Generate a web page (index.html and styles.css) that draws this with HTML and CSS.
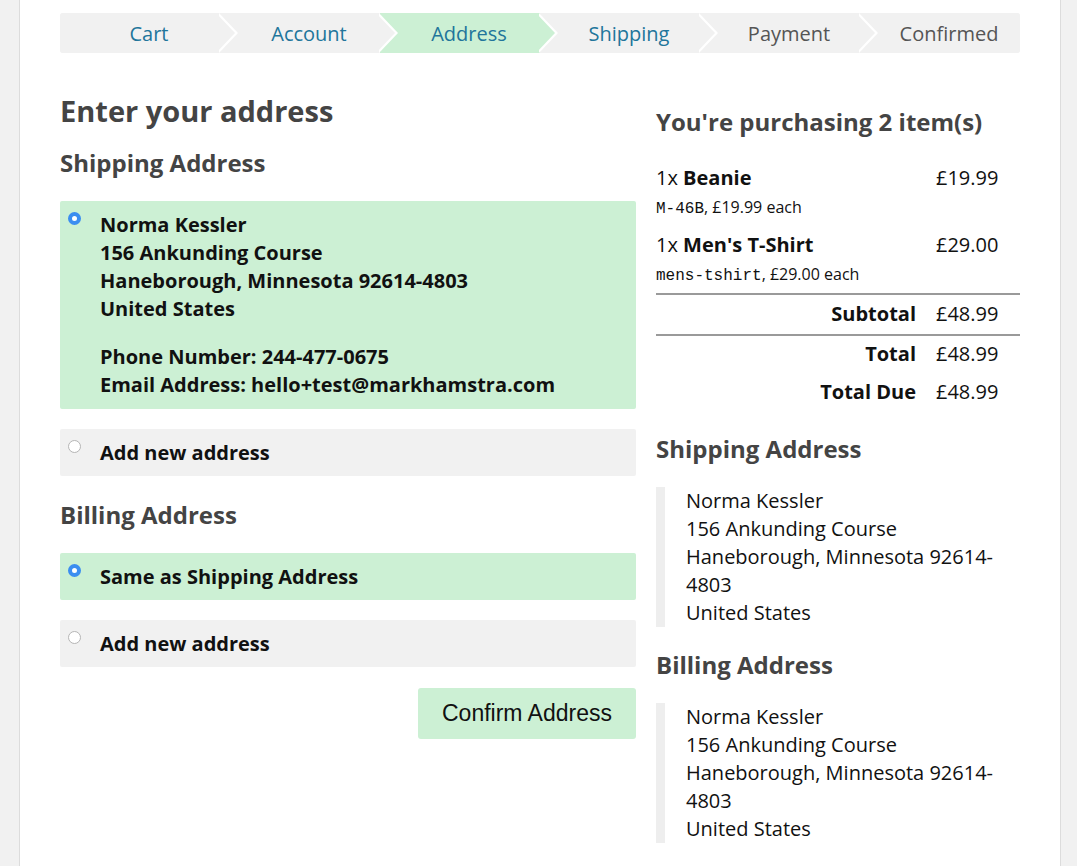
FILE: index.html
```html
<!DOCTYPE html>
<html lang="en">
<head>
<meta charset="utf-8">
<title>Checkout - Address</title>
<link rel="stylesheet" href="styles.css">
</head>
<body>
<div class="page">
  <ol class="steps">
    <li class="step done">Cart</li>
    <li class="step done">Account</li>
    <li class="step current">Address</li>
    <li class="step done">Shipping</li>
    <li class="step todo">Payment</li>
    <li class="step todo last">Confirmed</li>
  </ol>

  <div class="main">
    <section class="left">
      <h2 class="page-title">Enter your address</h2>
      <h3 class="section-title">Shipping Address</h3>

      <label class="option selected big">
        <input type="radio" name="shipping" checked>
        <span class="option-body">
          <span class="para">Norma Kessler<br>156 Ankunding Course<br>Haneborough, Minnesota 92614-4803<br>United States</span>
          <span class="para">Phone Number: 244-477-0675<br>Email Address: hello+test@markhamstra.com</span>
        </span>
      </label>

      <label class="option">
        <input type="radio" name="shipping">
        <span class="option-body">Add new address</span>
      </label>

      <h3 class="section-title billing">Billing Address</h3>

      <label class="option selected">
        <input type="radio" name="billing" checked>
        <span class="option-body">Same as Shipping Address</span>
      </label>

      <label class="option">
        <input type="radio" name="billing">
        <span class="option-body">Add new address</span>
      </label>

      <div class="actions">
        <button class="confirm" type="button">Confirm Address</button>
      </div>
    </section>

    <aside class="right">
      <h3 class="section-title summary-title">You're purchasing 2 item(s)</h3>

      <div class="cart">
        <div class="item">
          <div class="item-name">1x <b>Beanie</b></div>
          <div class="price">£19.99</div>
          <div class="item-meta"><code>M-46B</code>, £19.99 each</div>
        </div>
        <div class="item last-item">
          <div class="item-name">1x <b>Men's T-Shirt</b></div>
          <div class="price">£29.00</div>
          <div class="item-meta"><code>mens-tshirt</code>, £29.00 each</div>
        </div>
        <div class="totals subtotal">
          <div class="label">Subtotal</div>
          <div class="price">£48.99</div>
        </div>
        <div class="totals total">
          <div class="label">Total</div>
          <div class="price">£48.99</div>
        </div>
        <div class="totals">
          <div class="label">Total Due</div>
          <div class="price">£48.99</div>
        </div>
      </div>

      <h3 class="section-title side-title">Shipping Address</h3>
      <blockquote class="addr">Norma Kessler<br>156 Ankunding Course<br>Haneborough, Minnesota 92614-4803<br>United States</blockquote>

      <h3 class="section-title side-title">Billing Address</h3>
      <blockquote class="addr">Norma Kessler<br>156 Ankunding Course<br>Haneborough, Minnesota 92614-4803<br>United States</blockquote>
    </aside>
  </div>
</div>
</body>
</html>
```

FILE: styles.css
```css
* { box-sizing: border-box; }

html, body {
  margin: 0;
  padding: 0;
  background: #f1f1f1;
  font-family: "Open Sans", "Noto Sans", sans-serif;
  color: #111;
}

.page {
  margin-left: 19px;
  width: 1042px;
  min-height: 866px;
  background: #fff;
  border-left: 1px solid #dcdcdc;
  border-right: 1px solid #dcdcdc;
  padding: 13px 40px 0 40px;
}

/* Steps */
.steps {
  list-style: none;
  margin: 0;
  padding: 0;
  display: grid;
  grid-template-columns: repeat(6, 1fr);
  height: 40px;
  background: #f1f1f1;
  border-radius: 3px;
}

.step {
  position: relative;
  display: flex;
  align-items: center;
  justify-content: center;
  padding-left: 18px;
  font-size: 20px;
  background: #f1f1f1;
  color: #21759b;
}

.step:first-child { border-radius: 3px 0 0 3px; }
.step.last { border-radius: 0 3px 3px 0; }

.step.todo { color: #555; }
.step.current { background: #ccf0d4; }

.step::before,
.step::after {
  content: "";
  position: absolute;
  top: 0;
  width: 19px;
  height: 40px;
  clip-path: polygon(0 0, 100% 50%, 0 100%);
  z-index: 1;
}

.step::before {
  left: calc(100% - 1px);
  background: #fff;
}

.step::after {
  left: calc(100% - 4px);
  background: #f1f1f1;
}

.step.current::after { background: #ccf0d4; }

.step.last::before,
.step.last::after { display: none; }

/* Main grid */
.main {
  display: grid;
  grid-template-columns: 576px 364px;
  column-gap: 20px;
  margin-top: 41px;
}

.page-title {
  margin: 0;
  font-size: 29px;
  line-height: 34px;
  font-weight: 700;
  color: #444;
}

.section-title {
  margin: 21px 0 0;
  font-size: 24px;
  line-height: 28px;
  font-weight: 700;
  color: #444;
}

.section-title.billing { margin-top: 25px; }

.option {
  display: flex;
  align-items: flex-start;
  margin-top: 20px;
  padding: 10px 10px 9px 8px;
  background: #f1f1f1;
  border-radius: 2px;
  font-size: 20px;
  line-height: 28px;
  font-weight: 700;
  color: #111;
}

.option.big { padding-bottom: 10px; }

.option + .option { margin-top: 20px; }
.section-title + .option { margin-top: 24px; }

.option.selected { background: #ccf0d4; }

.option input {
  -webkit-appearance: none;
  appearance: none;
  flex: none;
  width: 13px;
  height: 13px;
  margin: 1px 19px 0 0;
  border-radius: 50%;
  background: #fff;
  border: 1px solid #b5b5b5;
}

.option input:checked {
  background: #fff;
  border: 4px solid #3b8ef0;
}

.option-body { display: block; }
.para { display: block; }
.para + .para { margin-top: 20px; }

.actions {
  display: flex;
  justify-content: flex-end;
  margin-top: 21px;
}

.confirm {
  font-family: "Liberation Sans", Arial, sans-serif;
  font-size: 23px;
  color: #111;
  background: #ccf0d4;
  border: none;
  border-radius: 3px;
  height: 51px;
  width: 218px;
  padding: 0;
}

/* Right */
.summary-title { margin-top: 14px; }

.cart {
  margin-top: 28px;
  font-size: 20px;
  line-height: 28px;
}

.item,
.totals {
  display: grid;
  grid-template-columns: 1fr 84px;
  column-gap: 20px;
}

.item + .item { margin-top: 11px; }

.item-name b { font-weight: 700; }

.item-meta {
  grid-column: 1 / -1;
  font-size: 16px;
  line-height: 22px;
  margin-top: 4px;
}

.item-meta code {
  font-family: "Liberation Mono", "Courier New", monospace;
  font-size: 16px;
}

.item.last-item { padding-bottom: 6px; }

.totals {
  padding: 5px 0;
}

.totals .label {
  text-align: right;
  font-weight: 700;
}

.subtotal,
.total { border-top: 2px solid #9a9a9a; }
.subtotal { padding-bottom: 6px; }
.total { padding-top: 4px; }

.side-title { margin-top: 24px; }

.addr {
  margin: 24px 0 0;
  padding: 0 0 0 21px;
  border-left: 9px solid #eee;
  font-size: 20px;
  line-height: 28px;
  color: #111;
}
```
